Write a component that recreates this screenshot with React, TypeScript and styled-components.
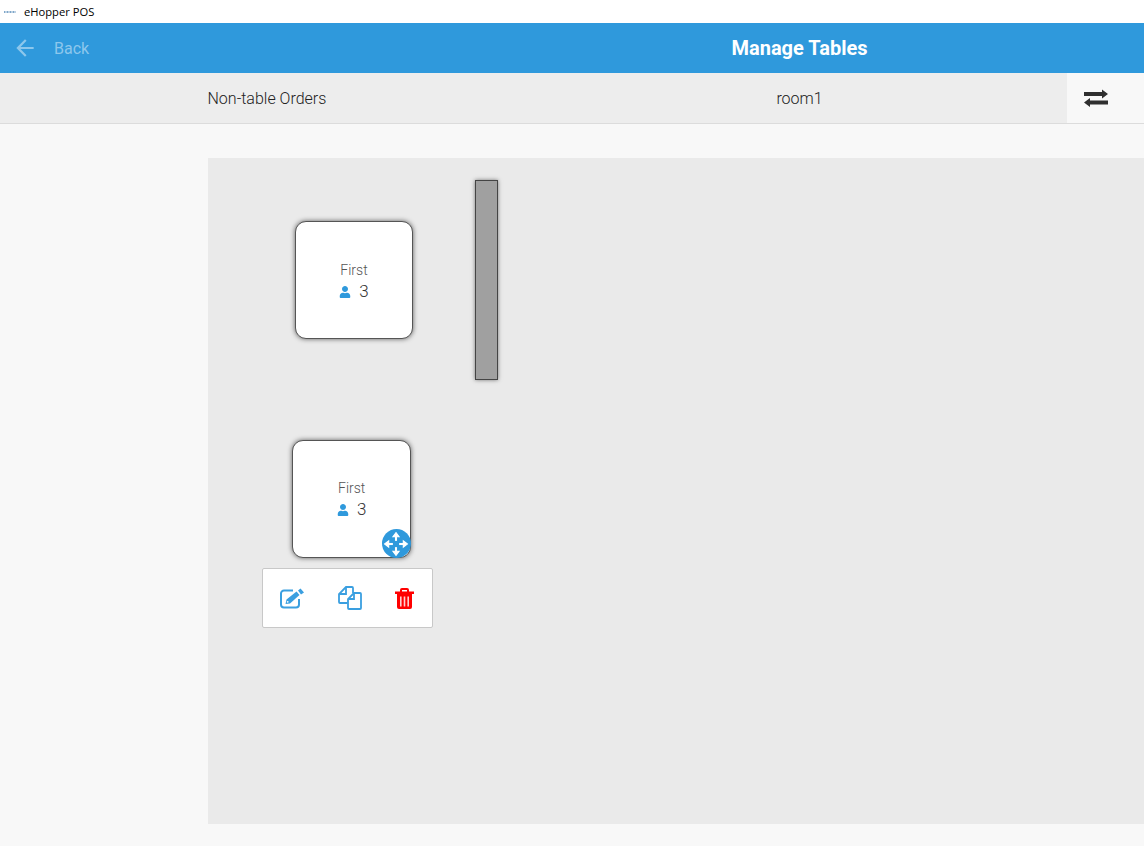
import styled, { createGlobalStyle } from "styled-components";
import { MdArrowBack } from "react-icons/md";
import { FaUser } from "react-icons/fa";

const GlobalStyle = createGlobalStyle`
  html, body {
    margin: 0;
    padding: 0;
    background: #f8f8f8;
  }
  body {
    font-family: "Roboto", "Liberation Sans", sans-serif;
  }
`;

const ExchangeIcon = () => (
  <svg width="24" height="18" viewBox="0 0 24 18" fill="#2f2f2f">
    <path d="M0 3 H18 V0.5 L24 5 L18 9.5 V7 H0 Z" />
    <path d="M24 11.5 H6 V9 L0 13.5 L6 18 V15.5 H24 Z" />
  </svg>
);

const MoveIcon = () => (
  <svg width="26" height="26" viewBox="0 0 25 25" fill="#ffffff" stroke="#ffffff" strokeWidth="2">
    <path d="M12.5 4.5 V9.5" fill="none" />
    <path d="M12.5 15.5 V20.5" fill="none" />
    <path d="M4.5 12.5 H9.5" fill="none" />
    <path d="M15.5 12.5 H20.5" fill="none" />
    <path d="M12.5 1.5 L15.5 5.5 H9.5 Z" strokeWidth="1" />
    <path d="M12.5 23.5 L15.5 19.5 H9.5 Z" strokeWidth="1" />
    <path d="M1.5 12.5 L5.5 9.5 V15.5 Z" strokeWidth="1" />
    <path d="M23.5 12.5 L19.5 9.5 V15.5 Z" strokeWidth="1" />
  </svg>
);

const EditIcon = () => (
  <svg width="25" height="21" viewBox="0 0 25 21" fill="none">
    <path
      d="M13 2.5 H4 a3 3 0 0 0 -3 3 V16.5 a3 3 0 0 0 3 3 H16 a3 3 0 0 0 3 -3 V11"
      stroke="#3a9fe0"
      strokeWidth="2"
    />
    <path d="M5.5 16 L6.5 11.5 L16.5 3.5 L19.5 7 L10 15.5 Z" fill="#3a9fe0" />
    <circle cx="7.7" cy="13.8" r="0.9" fill="#ffffff" />
    <path d="M18 2.5 L20.5 0.5 L24 4.5 L21 6.5 Z" fill="#3a9fe0" />
  </svg>
);

const CopyIcon = () => (
  <svg width="24" height="24" viewBox="0 0 24 24" fill="none" stroke="#3a9fe0" strokeWidth="1.8">
    <path d="M15 7 V2 a1 1 0 0 0 -1 -1 H8 L1 8 V16 a1 1 0 0 0 1 1 H9.5" />
    <path d="M8 1.5 V8 H1.5" />
    <path d="M16 7 H22 a1 1 0 0 1 1 1 V22 a1 1 0 0 1 -1 1 H11 a1 1 0 0 1 -1 -1 V13 Z" />
    <path d="M16 7.5 V13 H10.5" />
  </svg>
);

const TrashIcon = () => (
  <svg width="19" height="21" viewBox="0 0 19 21">
    <path d="M6 4 V2 a1 1 0 0 1 1 -1 H12 a1 1 0 0 1 1 1 V4" fill="none" stroke="#ff0000" strokeWidth="2" />
    <rect x="0" y="3.5" width="19" height="2.5" fill="#ff0000" />
    <path d="M2 6 H17 V19 a2 2 0 0 1 -2 2 H4 a2 2 0 0 1 -2 -2 Z" fill="#ff0000" />
    <rect x="5" y="8.5" width="1.6" height="10" fill="#ffd0d0" />
    <rect x="8.7" y="8.5" width="1.6" height="10" fill="#ffd0d0" />
    <rect x="12.4" y="8.5" width="1.6" height="10" fill="#ffd0d0" />
  </svg>
);

const App = () => {
  return (
    <>
      <GlobalStyle />
      <Page>
        <TitleBar>
          <AppLogo viewBox="0 0 12 2">
            <path d="M0 1 H12" stroke="#7fa6c9" strokeWidth="2" strokeDasharray="1 0.5" />
          </AppLogo>
          <AppName>eHopper POS</AppName>
        </TitleBar>
        <Header>
          <BackButton>
            <MdArrowBack size={26} />
            <BackLabel>Back</BackLabel>
          </BackButton>
          <HeaderTitle>Manage Tables</HeaderTitle>
        </Header>
        <Tabs>
          <NonTableTab>Non-table Orders</NonTableTab>
          <RoomTab>room1</RoomTab>
          <SwitchButton>
            <ExchangeIcon />
          </SwitchButton>
        </Tabs>
        <Body>
          <Canvas>
            <Table $left={87} $top={63} $width={118} $pad={3}>
              <TableName>First</TableName>
              <Seats>
                <FaUser size={12} color="#2f99dc" />
                <span>3</span>
              </Seats>
            </Table>
            <Wall />
            <Table $left={84.4} $top={282} $width={118.6} $pad={1}>
              <TableName>First</TableName>
              <Seats>
                <FaUser size={12} color="#2f99dc" />
                <span>3</span>
              </Seats>
              <MoveHandle>
                <MoveIcon />
              </MoveHandle>
            </Table>
            <Actions>
              <EditIcon />
              <CopyIcon />
              <TrashIcon />
            </Actions>
          </Canvas>
        </Body>
      </Page>
    </>
  );
};

export default App;

const Page = styled.div`
  width: 1144px;
  height: 846px;
  overflow: hidden;
  display: flex;
  flex-direction: column;
  background: #f8f8f8;
`;
const TitleBar = styled.div`
  height: 23px;
  background: #ffffff;
  display: flex;
  align-items: center;
  padding-left: 4px;
  gap: 8px;
`;
const AppLogo = styled.svg`
  width: 12px;
  height: 2px;
`;
const AppName = styled.span`
  font-family: "Open Sans", "Noto Sans", sans-serif;
  font-size: 11.2px;
  color: #000000;
`;
const Header = styled.div`
  height: 50px;
  background: #2f99dc;
  display: grid;
  grid-template-columns: 455px 1fr;
  align-items: center;
`;
const BackButton = styled.div`
  display: flex;
  align-items: center;
  padding-left: 12px;
  gap: 16px;
  color: #8dc7ec;
`;
const BackLabel = styled.span`
  font-size: 16px;
`;
const HeaderTitle = styled.div`
  width: 689px;
  text-align: center;
  color: #ffffff;
  font-size: 20px;
  font-weight: 700;
`;
const Tabs = styled.div`
  height: 50px;
  display: flex;
  box-sizing: content-box;
  background: #ededed;
  border-bottom: 1px solid #dcdcdc;
`;
const NonTableTab = styled.div`
  width: 532px;
  padding-left: 207.5px;
  box-sizing: border-box;
  display: flex;
  align-items: center;
  font-size: 16px;
  font-weight: 300;
  color: #222222;
`;
const RoomTab = styled.div`
  flex: 1;
  display: flex;
  align-items: center;
  justify-content: center;
  font-size: 16px;
  font-weight: 300;
  color: #222222;
`;
const SwitchButton = styled.div`
  width: 77px;
  padding-left: 17px;
  box-sizing: border-box;
  background: #f8f8f8;
  display: flex;
  align-items: center;
`;
const Body = styled.div`
  flex: 1;
  padding: 34px 0 22px 208px;
  display: flex;
  min-height: 0;
`;
const Canvas = styled.div`
  position: relative;
  flex: 1;
  background: #eaeaea;
`;
const Table = styled.div<{ $left: number; $top: number; $width: number; $pad: number }>`
  position: absolute;
  left: ${(p) => p.$left}px;
  top: ${(p) => p.$top}px;
  width: ${(p) => p.$width}px;
  height: 118px;
  box-sizing: border-box;
  background: #ffffff;
  border: 1px solid #555555;
  border-radius: 11px;
  box-shadow: 0 0 5px rgba(0, 0, 0, 0.6);
  display: flex;
  flex-direction: column;
  align-items: center;
  justify-content: center;
  gap: 3px;
  padding-top: ${(p) => p.$pad}px;
  color: #333333;
`;
const TableName = styled.div`
  font-size: 14px;
  font-weight: 300;
  line-height: 17px;
  color: #555555;
`;
const Seats = styled.div`
  display: flex;
  align-items: center;
  gap: 8px;
  font-size: 17px;
  font-weight: 300;
  line-height: 19px;
`;
const MoveHandle = styled.div`
  position: absolute;
  right: -1px;
  bottom: -1px;
  width: 29px;
  height: 29px;
  border-radius: 50%;
  background: #2f99dc;
  display: flex;
  align-items: center;
  justify-content: center;
`;
const Wall = styled.div`
  position: absolute;
  left: 267px;
  top: 22px;
  width: 23px;
  height: 200px;
  box-sizing: border-box;
  background: #a0a0a0;
  border: 1px solid #444444;
  box-shadow: 0 0 4px rgba(0, 0, 0, 0.5);
`;
const Actions = styled.div`
  position: absolute;
  left: 54px;
  top: 410px;
  width: 171px;
  height: 60px;
  box-sizing: border-box;
  background: #ffffff;
  border: 1px solid #c8c8c8;
  border-radius: 2px;
  display: flex;
  align-items: center;
  justify-content: space-between;
  padding: 0 18px 0 17px;
`;
